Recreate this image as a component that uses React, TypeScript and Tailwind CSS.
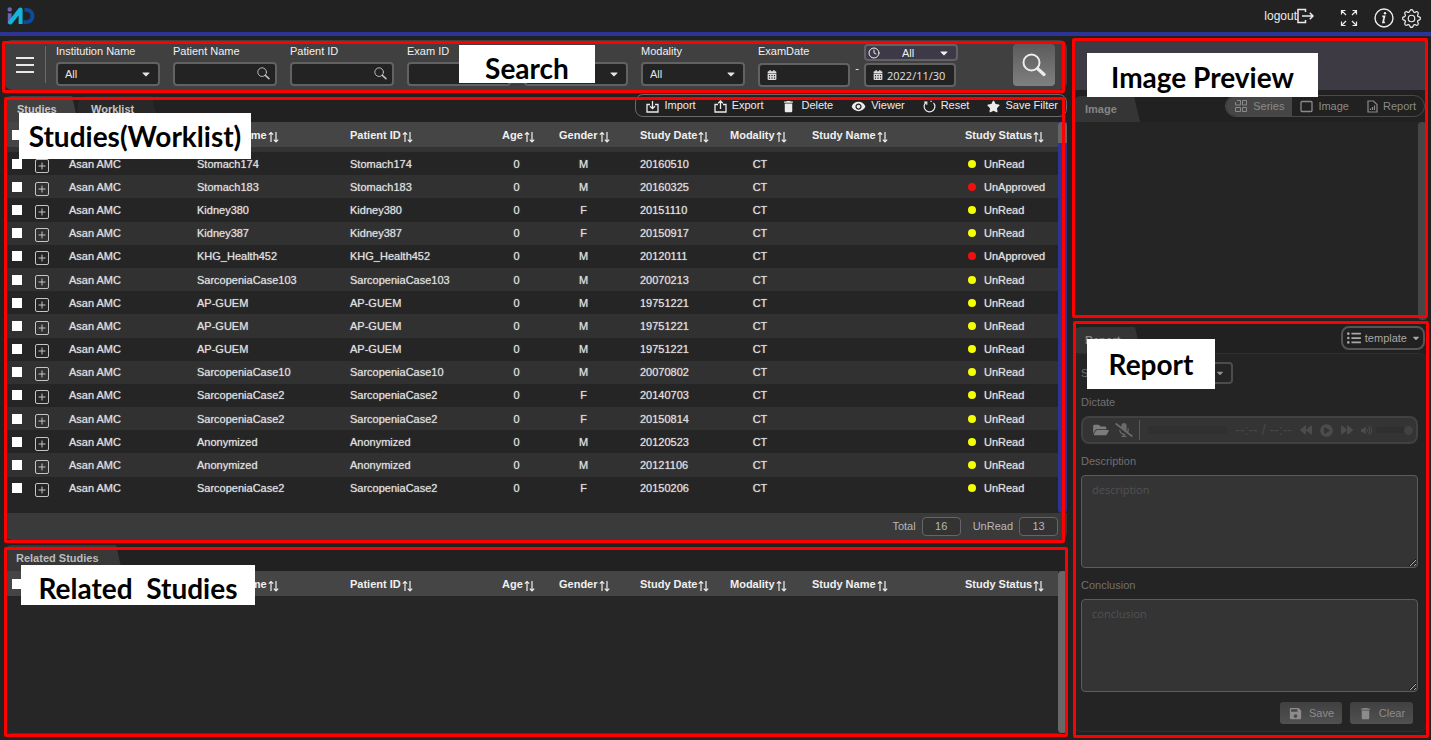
import React from "react";
import {
  FaBackward,
  FaCalendarAlt,
  FaCaretDown,
  FaFolderOpen,
  FaForward,
  FaListUl,
  FaMicrophoneSlash,
  FaPlayCircle,
  FaStar,
  FaVolumeUp,
} from "react-icons/fa";
import { BsGear } from "react-icons/bs";
import { MdDelete, MdSave, MdVisibility } from "react-icons/md";
import { Clock } from "lucide-react";

type Study = {
  name: string;
  gender: "M" | "F";
  date: string;
  status: "UnRead" | "UnApproved";
};

const studies: Study[] = [
  { name: "Stomach174", gender: "M", date: "20160510", status: "UnRead" },
  { name: "Stomach183", gender: "M", date: "20160325", status: "UnApproved" },
  { name: "Kidney380", gender: "F", date: "20151110", status: "UnRead" },
  { name: "Kidney387", gender: "F", date: "20150917", status: "UnRead" },
  { name: "KHG_Health452", gender: "M", date: "20120111", status: "UnApproved" },
  { name: "SarcopeniaCase103", gender: "M", date: "20070213", status: "UnRead" },
  { name: "AP-GUEM", gender: "M", date: "19751221", status: "UnRead" },
  { name: "AP-GUEM", gender: "M", date: "19751221", status: "UnRead" },
  { name: "AP-GUEM", gender: "M", date: "19751221", status: "UnRead" },
  { name: "SarcopeniaCase10", gender: "M", date: "20070802", status: "UnRead" },
  { name: "SarcopeniaCase2", gender: "F", date: "20140703", status: "UnRead" },
  { name: "SarcopeniaCase2", gender: "F", date: "20150814", status: "UnRead" },
  { name: "Anonymized", gender: "M", date: "20120523", status: "UnRead" },
  { name: "Anonymized", gender: "M", date: "20121106", status: "UnRead" },
  { name: "SarcopeniaCase2", gender: "F", date: "20150206", status: "UnRead" },
];

function Logo() {
  return (
    <svg viewBox="0 0 28 18" className="h-[18px] w-7" aria-label="IND" role="img">
      <circle cx="2.7" cy="2.4" r="2.200" fill="#6a63b5" />
      <path d="M.8 6.200h3.800v6L.8 16.400z" fill="#6a63b5" />
      <path d="M.8 15.300 11.600 1.300c1.300-1.700 4-.9 4 1.200V17h-4V8.400L5.200 16.600C3.600 18.400.8 17.300.8 15.300z" fill="#12b5dc" />
      <path d="M17.500 1h2c4.600 0 7.900 3.400 7.900 8s-3.300 8-7.900 8h-3v-3.800h2.800c2.600 0 4.200-1.800 4.200-4.200s-1.600-4.200-4.200-4.200h-1.800z" fill="#0c4a9e" />
    </svg>
  );
}

function MagnifierIcon({ className, weight }: { className: string; weight: number }) {
  return (
    <svg viewBox="0 0 24 24" className={className} fill="none" stroke="currentColor" strokeLinecap="round">
      <circle cx="9.500" cy="9.500" r="8" strokeWidth={weight} />
      <path d="m15.500 15.500 6.500 6" strokeWidth={weight * 1.600} />
    </svg>
  );
}

function LogoutIcon() {
  return (
    <svg viewBox="0 0 17 16" className="h-4 w-[17px]" fill="none" stroke="currentColor" strokeWidth="1.500">
      <path d="M8.500 4V1.500H1v13h7.500V12M5 8h11M12.800 4.800 16 8l-3.200 3.200" />
    </svg>
  );
}

function ExpandIcon() {
  return (
    <svg viewBox="0 0 18 18" className="size-[18px]" fill="none" stroke="currentColor" strokeWidth="1.200">
      <path d="M1.500 5.500v-4h4M1.500 1.500l4.500 4.500M12.500 1.500h4v4M16.500 1.500 12 6M1.500 12.500v4h4M1.500 16.500 6 12M16.500 12.500v4h-4M16.500 16.500 12 12" />
    </svg>
  );
}

function InfoIcon() {
  return (
    <svg viewBox="0 0 20 20" className="size-5" fill="none" stroke="currentColor" strokeWidth="1.400">
      <circle cx="10" cy="10" r="9" />
      <path d="M8.300 8.300h2.200L9 14.400h1.900" strokeWidth="1.700" />
      <circle cx="11" cy="5.300" r="1.200" fill="currentColor" stroke="none" />
    </svg>
  );
}

function ImportIcon() {
  return (
    <svg viewBox="0 0 13 13" className="size-[13px]" fill="none" stroke="currentColor" strokeWidth="1.300">
      <path d="M4 4.500H1v7.500h11V4.500H9M6.500 1v7.500M4 6.200l2.500 2.500L9 6.200" />
    </svg>
  );
}

function ExportIcon() {
  return (
    <svg viewBox="0 0 13 13" className="size-[13px]" fill="none" stroke="currentColor" strokeWidth="1.300">
      <path d="M4 4.500H1v7.500h11V4.500H9M6.500 9V1M4.200 3.300 6.500 1l2.300 2.300" />
    </svg>
  );
}

function ResetIcon() {
  return (
    <svg viewBox="0 0 13 13" className="size-[13px]" fill="none" stroke="currentColor" strokeWidth="1.200">
      <path d="M3.200 2.200A5.400 5.400 0 1 0 10.500 2.800" />
      <path d="M1.200 2.200h2.600v2.600M7.500 1.100l1.300.4" />
    </svg>
  );
}

function SeriesIcon() {
  return (
    <svg viewBox="0 0 14 14" className="size-[14px]" fill="none" stroke="currentColor">
      <path d="M3 1.500h3.500v4.500H1.500V3M8.500 1.500h4v4.500h-4zM1.500 8.500h5v4h-5zM8.500 8.500h4v4h-4z" />
    </svg>
  );
}

function FrameIcon() {
  return (
    <svg viewBox="0 0 13 13" className="size-[13px]" fill="none" stroke="currentColor" strokeWidth="1.300">
      <rect x="1" y="1.500" width="11" height="10" rx="1" />
    </svg>
  );
}

function ReportIcon() {
  return (
    <svg viewBox="0 0 11 13" className="h-[13px] w-[11px]" fill="none" stroke="currentColor" strokeWidth="1.200">
      <path d="M1 1h5.500L10 4.500V12H1zM3.500 10V8.500M5.500 10V7M7.500 10V5.500" />
    </svg>
  );
}

function SortIcon() {
  return (
    <svg viewBox="0 0 11 12" className="h-3 w-[11px]" fill="none" stroke="currentColor" strokeWidth="1.200">
      <path d="M3 11V1.500M.8 3.700 3 1.500l2.200 2.200M8 1v9.800M5.800 8.600 8 10.800l2.200-2.200" />
    </svg>
  );
}

function Annotation({ frame, label, children }: { frame: string; label: string; children: string }) {
  return (
    <>
      <div className={`pointer-events-none absolute z-10 rounded-[2px] border-3 border-[#ff0000] ${frame}`} />
      <div
        className={`pointer-events-none absolute z-20 flex items-center justify-center bg-white font-[Lato,sans-serif] text-[28px] leading-8 font-bold whitespace-pre text-black ${label}`}
      >
        {children}
      </div>
    </>
  );
}

function Dropdown({ id, value, label }: { id: string; value: string; label?: string }) {
  return (
    <div className="relative">
      <select
        id={id}
        aria-label={label}
        className="block h-6 w-full appearance-none rounded border-2 border-[#626262] bg-[#232323] pl-[7px] text-[11px] text-[#e4e4e4]"
      >
        <option>{value}</option>
      </select>
      <FaCaretDown className="pointer-events-none absolute top-1.5 right-2 size-3 text-[#e4e4e4]" />
    </div>
  );
}

function Field({ id, label, kind }: { id: string; label: string; kind: "select" | "text" }) {
  return (
    <div className="flex w-[104px] flex-col gap-1">
      <label htmlFor={id} className="text-[11px] leading-[14px] whitespace-nowrap">
        {label}
      </label>
      {kind === "select" ? (
        <Dropdown id={id} value="All" />
      ) : (
        <div className="relative">
          <input
            id={id}
            type="text"
            className="block h-6 w-full rounded border-2 border-[#626262] bg-[#232323] pr-6 pl-2 text-[11px]"
          />
          <MagnifierIcon
            weight={1.8}
            className="pointer-events-none absolute top-[5px] right-[7px] size-[13px] text-[#bdbdbd]"
          />
        </div>
      )}
    </div>
  );
}

function DateBox({ id, value, label }: { id: string; value: string; label: string }) {
  return (
    <div className="relative w-[92px]">
      <FaCalendarAlt className="pointer-events-none absolute top-[7px] left-[9px] size-[10px] text-[#e0e0e0]" />
      <input
        id={id}
        type="text"
        aria-label={label}
        defaultValue={value}
        className="block h-6 w-full rounded border-2 border-[#626262] bg-[#232323] pl-[21px] font-['Open_Sans',sans-serif] text-[11px] text-[#e0e0e0]"
      />
    </div>
  );
}

function SearchPanel() {
  return (
    <section className="relative">
      <div className="flex h-[50px] items-start rounded-lg bg-[#404040] pr-3 text-[#f0f0f0]">
        <button type="button" aria-label="Menu" className="mt-[17px] ml-3 flex w-[18px] flex-col gap-[5px]">
          <span className="h-0.5 w-full bg-[#e8e8e8]" />
          <span className="h-0.5 w-full bg-[#e8e8e8]" />
          <span className="h-0.5 w-full bg-[#e8e8e8]" />
        </button>
        <div className="mt-1.5 ml-[11px] h-[37px] w-px bg-[#6a6a6a]" />
        <div className="mt-1 ml-2.5 flex items-end gap-[13px]">
          <Field id="institution" label="Institution Name" kind="select" />
          <Field id="patient-name" label="Patient Name" kind="text" />
          <Field id="patient-id" label="Patient ID" kind="text" />
          <Field id="exam-id" label="Exam ID" kind="text" />
          <div className="w-[104px]">
            <Dropdown id="study-status" value="All" label="Study Status" />
          </div>
          <Field id="modality" label="Modality" kind="select" />
        </div>
        <div className="mt-1 ml-[13px] flex flex-col gap-[5px]">
          <label htmlFor="exam-from" className="text-[11px] leading-[14px]">
            ExamDate
          </label>
          <DateBox id="exam-from" value="" label="ExamDate" />
        </div>
        <span className="mt-5 w-[14px] text-center text-[11px]">-</span>
        <div className="mt-1 flex flex-col gap-0.5">
          <div className="relative">
            <Clock className="pointer-events-none absolute top-[3px] left-1 size-3" />
            <select
              aria-label="Period"
              className="block h-[17px] w-[94px] appearance-none rounded border-2 border-[#626262] bg-[#3d3946] pl-9 text-[11px] leading-3"
            >
              <option>All</option>
            </select>
            <FaCaretDown className="pointer-events-none absolute top-[3px] right-2 size-3" />
          </div>
          <DateBox id="exam-to" value="2022/11/30" label="ExamDate to" />
        </div>
        <button
          type="button"
          aria-label="Search"
          className="mt-1 ml-auto flex size-[42px] items-center justify-center rounded bg-linear-to-b from-[#5c5c5c] to-[#808080]"
        >
          <MagnifierIcon weight={2} className="size-6 text-[#ececec]" />
        </button>
      </div>
      <Annotation frame="-left-0.5 right-0.5 top-px -bottom-[3px]" label="left-[455px] top-[5px] w-[136px] h-[38px] pt-2">
        Search
      </Annotation>
    </section>
  );
}

const tabShape = "[clip-path:polygon(0_0,calc(100%_-_6px)_0,100%_100%,0_100%)]";

function Tab({ children, tone }: { children: string; tone: string }) {
  return (
    <button
      type="button"
      className={`h-[26px] rounded-tl-lg rounded-tr-md text-left text-[11px] font-bold whitespace-nowrap ${tabShape} ${tone}`}
    >
      {children}
    </button>
  );
}

const columns = ["Patient Name", "Patient ID", "Age", "Gender", "Study Date", "Modality", "Study Name", "Study Status"];

function StudyTable({ rows, label }: { rows: Study[]; label: string }) {
  return (
    <table
      aria-label={label}
      className={`w-full table-fixed border-collapse text-[11px] leading-[14px] ${rows.length > 0 ? "h-[378px]" : ""}`}
    >
      <colgroup>
        <col className="w-[26px]" />
        <col className="w-[25px]" />
        <col className="w-[128px]" />
        <col className="w-[153px]" />
        <col className="w-[152px]" />
        <col className="w-[57px]" />
        <col className="w-[81px]" />
        <col className="w-[90px]" />
        <col className="w-[82px]" />
        <col className="w-[153px]" />
        <col />
      </colgroup>
      <thead>
        <tr className="h-[25px] bg-[#454545] text-[#f0f0f0]">
          <th className="pl-2">
            <input type="checkbox" aria-label="Select all" className="block size-[10px] appearance-none bg-white" />
          </th>
          <th aria-label="Details" />
          <th aria-label="Institution" />
          {columns.map((c) => (
            <th key={c} className="pl-[14px] text-left font-bold whitespace-nowrap">
              <span className="flex items-center gap-px">
                {c}
                <span className="pt-1">
                  <SortIcon />
                </span>
              </span>
            </th>
          ))}
        </tr>
        {rows.length > 0 && (
          <tr className="h-[5px] bg-[#333333]" aria-hidden="true">
            <td colSpan={11} className="p-0" />
          </tr>
        )}
      </thead>
      {rows.length > 0 && (
        <tbody className="text-[#dedede] [text-shadow:0_0_1px_#bbbbbb]">
          {rows.map((r, i) => (
            <tr key={i} className="h-[23px] odd:bg-[#252525] even:bg-[#313131]">
              <td className="pl-2">
                <input
                  type="checkbox"
                  aria-label={`Select ${r.name}`}
                  className="block size-[10px] appearance-none bg-white"
                />
              </td>
              <td className="pt-1 pl-[5px]">
                <button
                  type="button"
                  aria-label={`Expand ${r.name}`}
                  className="flex size-[14px] items-center justify-center rounded-[2px] border border-[#c4c4c4]"
                >
                  <svg viewBox="0 0 8 8" className="size-2" stroke="#c4c4c4" fill="none">
                    <path d="M4 .5v7M.5 4h7" />
                  </svg>
                </button>
              </td>
              <td className="pl-[14px]">Asan AMC</td>
              <td className="pl-[14px]">{r.name}</td>
              <td className="pl-[14px]">{r.name}</td>
              <td className="text-center">0</td>
              <td className="pr-1 text-center">{r.gender}</td>
              <td className="pl-[14px]">{r.date}</td>
              <td className="pl-1.5 text-center">CT</td>
              <td />
              <td className="pl-[17px]">
                <span className="flex items-center gap-2">
                  <span
                    className={`size-2 rounded-full ${r.status === "UnRead" ? "bg-[#f4ff00]" : "bg-[#f01010]"}`}
                  />
                  {r.status}
                </span>
              </td>
            </tr>
          ))}
        </tbody>
      )}
    </table>
  );
}

const actions = [
  { label: "Import", icon: <ImportIcon /> },
  { label: "Export", icon: <ExportIcon /> },
  { label: "Delete", icon: <MdDelete className="size-[15px]" /> },
  { label: "Viewer", icon: <MdVisibility className="size-[15px]" /> },
  { label: "Reset", icon: <ResetIcon /> },
  { label: "Save Filter", icon: <FaStar className="size-[13px]" /> },
];

function StudiesPanel() {
  return (
    <section className="relative">
      <div className="flex h-7 items-end">
        <Tab tone="w-[74px] bg-[#404040] pl-[13px] text-[#c8c8c8]">Studies</Tab>
        <Tab tone="w-[80px] bg-[#282828] pl-[13px] text-[#c8c8c8]">Worklist</Tab>
        <div className="mb-[5px] ml-auto flex h-[23px] items-center gap-[18px] rounded-lg border border-[#6a6a6a] pr-2 pl-2.5 text-[11px] text-[#ececec]">
          {actions.map((a) => (
            <button key={a.label} type="button" className="flex items-center gap-[5px] whitespace-nowrap">
              <span className="pt-0.5">{a.icon}</span>
              {a.label}
            </button>
          ))}
        </div>
      </div>
      <div className="flex h-[391px] bg-[#252525]">
        <div className="min-w-0 flex-1">
          <StudyTable rows={studies} label="Studies" />
        </div>
        <div className="w-[9px] rounded-b bg-[#2c3595]">
          <div className="h-[21px] rounded-t bg-[#666666]" />
        </div>
      </div>
      <div className="flex h-[27px] items-center justify-end rounded-b-lg bg-[#3a3a3a] pr-[9px] text-[11px] text-[#b8b8b8]">
        <span>Total</span>
        <output className="ml-1.5 flex h-[19px] w-[39px] items-center justify-center rounded border border-[#666666] bg-[#333333]">
          16
        </output>
        <span className="ml-3">UnRead</span>
        <output className="ml-1.5 flex h-[19px] w-[39px] items-center justify-center rounded border border-[#666666] bg-[#333333]">
          13
        </output>
      </div>
      <Annotation frame="left-0 right-0.5 top-[3px] -bottom-[3px]" label="left-[15px] top-[19px] w-[232px] h-[46px]">
        Studies(Worklist)
      </Annotation>
    </section>
  );
}

function RelatedPanel() {
  return (
    <section className="relative flex flex-1 flex-col pt-px">
      <Tab tone="w-[118px] bg-[#383838] pl-3 text-[#bcbcbc]">Related Studies</Tab>
      <div className="flex flex-1 rounded-b-lg border-b border-[#3a3a3a] bg-[#262626]">
        <div className="min-w-0 flex-1">
          <StudyTable rows={[]} label="Related studies" />
        </div>
        <div className="w-[9px] rounded bg-[#686868]" />
      </div>
      <Annotation frame="left-0 -right-px top-[3px] -bottom-[3px]" label="left-[17px] top-[21px] w-[234px] h-10 pt-1.5">
        {"Related  Studies"}
      </Annotation>
    </section>
  );
}

function PreviewPanel() {
  return (
    <section className="relative">
      <div className="h-[50px] bg-[#3e3a44]" />
      <div className="flex h-8 items-end justify-between">
        <Tab tone="w-[67px] bg-[#353535] pl-3 text-[#858585]">Image</Tab>
        <div className="mr-0.5 mb-[5px] flex h-[22px] overflow-hidden rounded-full border border-[#484848] text-[11px] text-[#8a8a8a]">
          <button type="button" className="flex items-center gap-[5px] bg-[#464646] px-2">
            <SeriesIcon />
            Series
          </button>
          <button type="button" className="flex items-center gap-[5px] px-2">
            <FrameIcon />
            Image
          </button>
          <button type="button" className="flex items-center gap-[5px] pr-2 pl-2.5">
            <ReportIcon />
            Report
          </button>
        </div>
      </div>
      <div className="flex h-[198px] justify-end bg-[#252525]">
        <div className="w-[9px] rounded bg-[#464646]" />
      </div>
      <Annotation frame="-left-px -right-px -top-0.5 bottom-0.5" label="left-[14px] top-[13px] w-[231px] h-11 pt-1">
        Image Preview
      </Annotation>
    </section>
  );
}

function Note({ id, label }: { id: string; label: string }) {
  return (
    <>
      <label htmlFor={id} className="block text-[11px] leading-[14px]">
        {label}
      </label>
      <textarea
        id={id}
        placeholder={label.toLowerCase()}
        className="mt-[7px] mb-2.5 block h-[93px] w-full rounded border border-[#5c5c5c] bg-[#343434] px-2.5 py-1.5 font-['Open_Sans',sans-serif] text-[11px] leading-4 placeholder:text-[#505254]"
      />
    </>
  );
}

function ReportPanel() {
  return (
    <section className="relative flex flex-1 flex-col pt-1.5">
      <div className="flex h-[27px] items-end justify-between">
        <Tab tone="w-[68px] bg-[#353535] pl-3 text-[#858585]">Report</Tab>
        <button
          type="button"
          className="mr-0.5 mb-[3px] flex h-6 items-center gap-1 rounded-lg border-2 border-[#555555] pr-0.5 pl-1 text-[11px] text-[#a8a8a8]"
        >
          <FaListUl className="size-[14px]" />
          template
          <FaCaretDown className="size-[10px]" />
        </button>
      </div>
      <div className="flex-1 rounded-lg border border-[#2f2f2f] bg-[#242424] pt-2 pr-2 pl-[7px] text-[#707070]">
        <div className="flex items-center justify-between pr-[185px] text-[11px]">
          <label htmlFor="report-status">Status</label>
          <div className="relative w-[92px]">
            <select
              id="report-status"
              className="block h-[22px] w-full appearance-none rounded border-2 border-[#4c4c4c] bg-[#242424]"
            />
            <FaCaretDown className="pointer-events-none absolute top-1.5 right-2 size-[10px] text-[#909090]" />
          </div>
        </div>
        <p className="mt-[11px] text-[11px] leading-[14px]">Dictate</p>
        <div className="mt-[7px] mb-2.5 flex h-7 items-center rounded-lg border-2 border-[#414141] bg-[#343434] pr-[3px] pl-2.5 text-[#4c4c4c]">
          <button type="button" aria-label="Open recording" className="text-[#7c7c7c]">
            <FaFolderOpen className="h-[14px] w-4" />
          </button>
          <button type="button" aria-label="Mute microphone" className="ml-1.5 text-[#6a6a6a]">
            <FaMicrophoneSlash className="h-[14px] w-[18px]" />
          </button>
          <div className="ml-1.5 h-5 w-px bg-[#5a5a5a]" />
          <div className="ml-2 h-2 min-w-0 flex-1 rounded bg-[#303030]" />
          <span className="mx-2 text-[14px] whitespace-nowrap text-[#484848]">--:-- / --:--</span>
          <button type="button" aria-label="Rewind">
            <FaBackward className="size-3" />
          </button>
          <button type="button" aria-label="Play" className="ml-2">
            <FaPlayCircle className="size-[13px]" />
          </button>
          <button type="button" aria-label="Forward" className="ml-2">
            <FaForward className="size-3" />
          </button>
          <FaVolumeUp className="ml-2 size-[11px]" />
          <div className="ml-1 flex h-1.5 w-[37px] items-center justify-end rounded bg-[#2f2f2f]">
            <span className="size-[9px] rounded-full bg-[#424242]" />
          </div>
        </div>
        <Note id="description" label="Description" />
        <Note id="conclusion" label="Conclusion" />
        <div className="flex justify-end gap-2 pr-[5px] text-[11px] text-[#8c8c8c]">
          <button
            type="button"
            className="flex h-[22px] w-[62px] items-center justify-center gap-1.5 rounded-[3px] bg-linear-to-b from-[#414141] to-[#505050]"
          >
            <MdSave className="size-[15px]" />
            Save
          </button>
          <button
            type="button"
            className="flex h-[22px] w-[63px] items-center justify-center gap-1.5 rounded-[3px] bg-linear-to-b from-[#414141] to-[#505050]"
          >
            <MdDelete className="size-[15px]" />
            Clear
          </button>
        </div>
      </div>
      <Annotation frame="left-0 -right-0.5 top-px -bottom-1.5" label="left-[14px] top-[19px] w-32 h-[50px]">
        Report
      </Annotation>
    </section>
  );
}

export default function App() {
  return (
    <div className="flex min-h-screen flex-col bg-[#212121] font-['Liberation_Sans',Arial,sans-serif]">
      <header className="flex h-9 items-center border-b-4 border-[#2c3595] bg-[#222222] pr-2.5 pl-[7px] text-[#ececec]">
        <Logo />
        <a href="#logout" className="ml-auto flex items-center text-[12px]">
          logout
          <LogoutIcon />
        </a>
        <button type="button" aria-label="Full screen" className="mt-1 ml-[26px]">
          <ExpandIcon />
        </button>
        <button type="button" aria-label="Information" className="mt-1 ml-4">
          <InfoIcon />
        </button>
        <button type="button" aria-label="Settings" className="mt-1 ml-2">
          <BsGear className="size-[19px]" />
        </button>
      </header>
      <main className="flex flex-1 gap-1.5 pt-1 pr-1 pl-1">
        <div className="flex min-w-0 flex-1 flex-col gap-1 pb-1.5">
          <SearchPanel />
          <StudiesPanel />
          <RelatedPanel />
        </div>
        <div className="flex w-[354px] flex-col pb-2">
          <PreviewPanel />
          <ReportPanel />
        </div>
      </main>
    </div>
  );
}
